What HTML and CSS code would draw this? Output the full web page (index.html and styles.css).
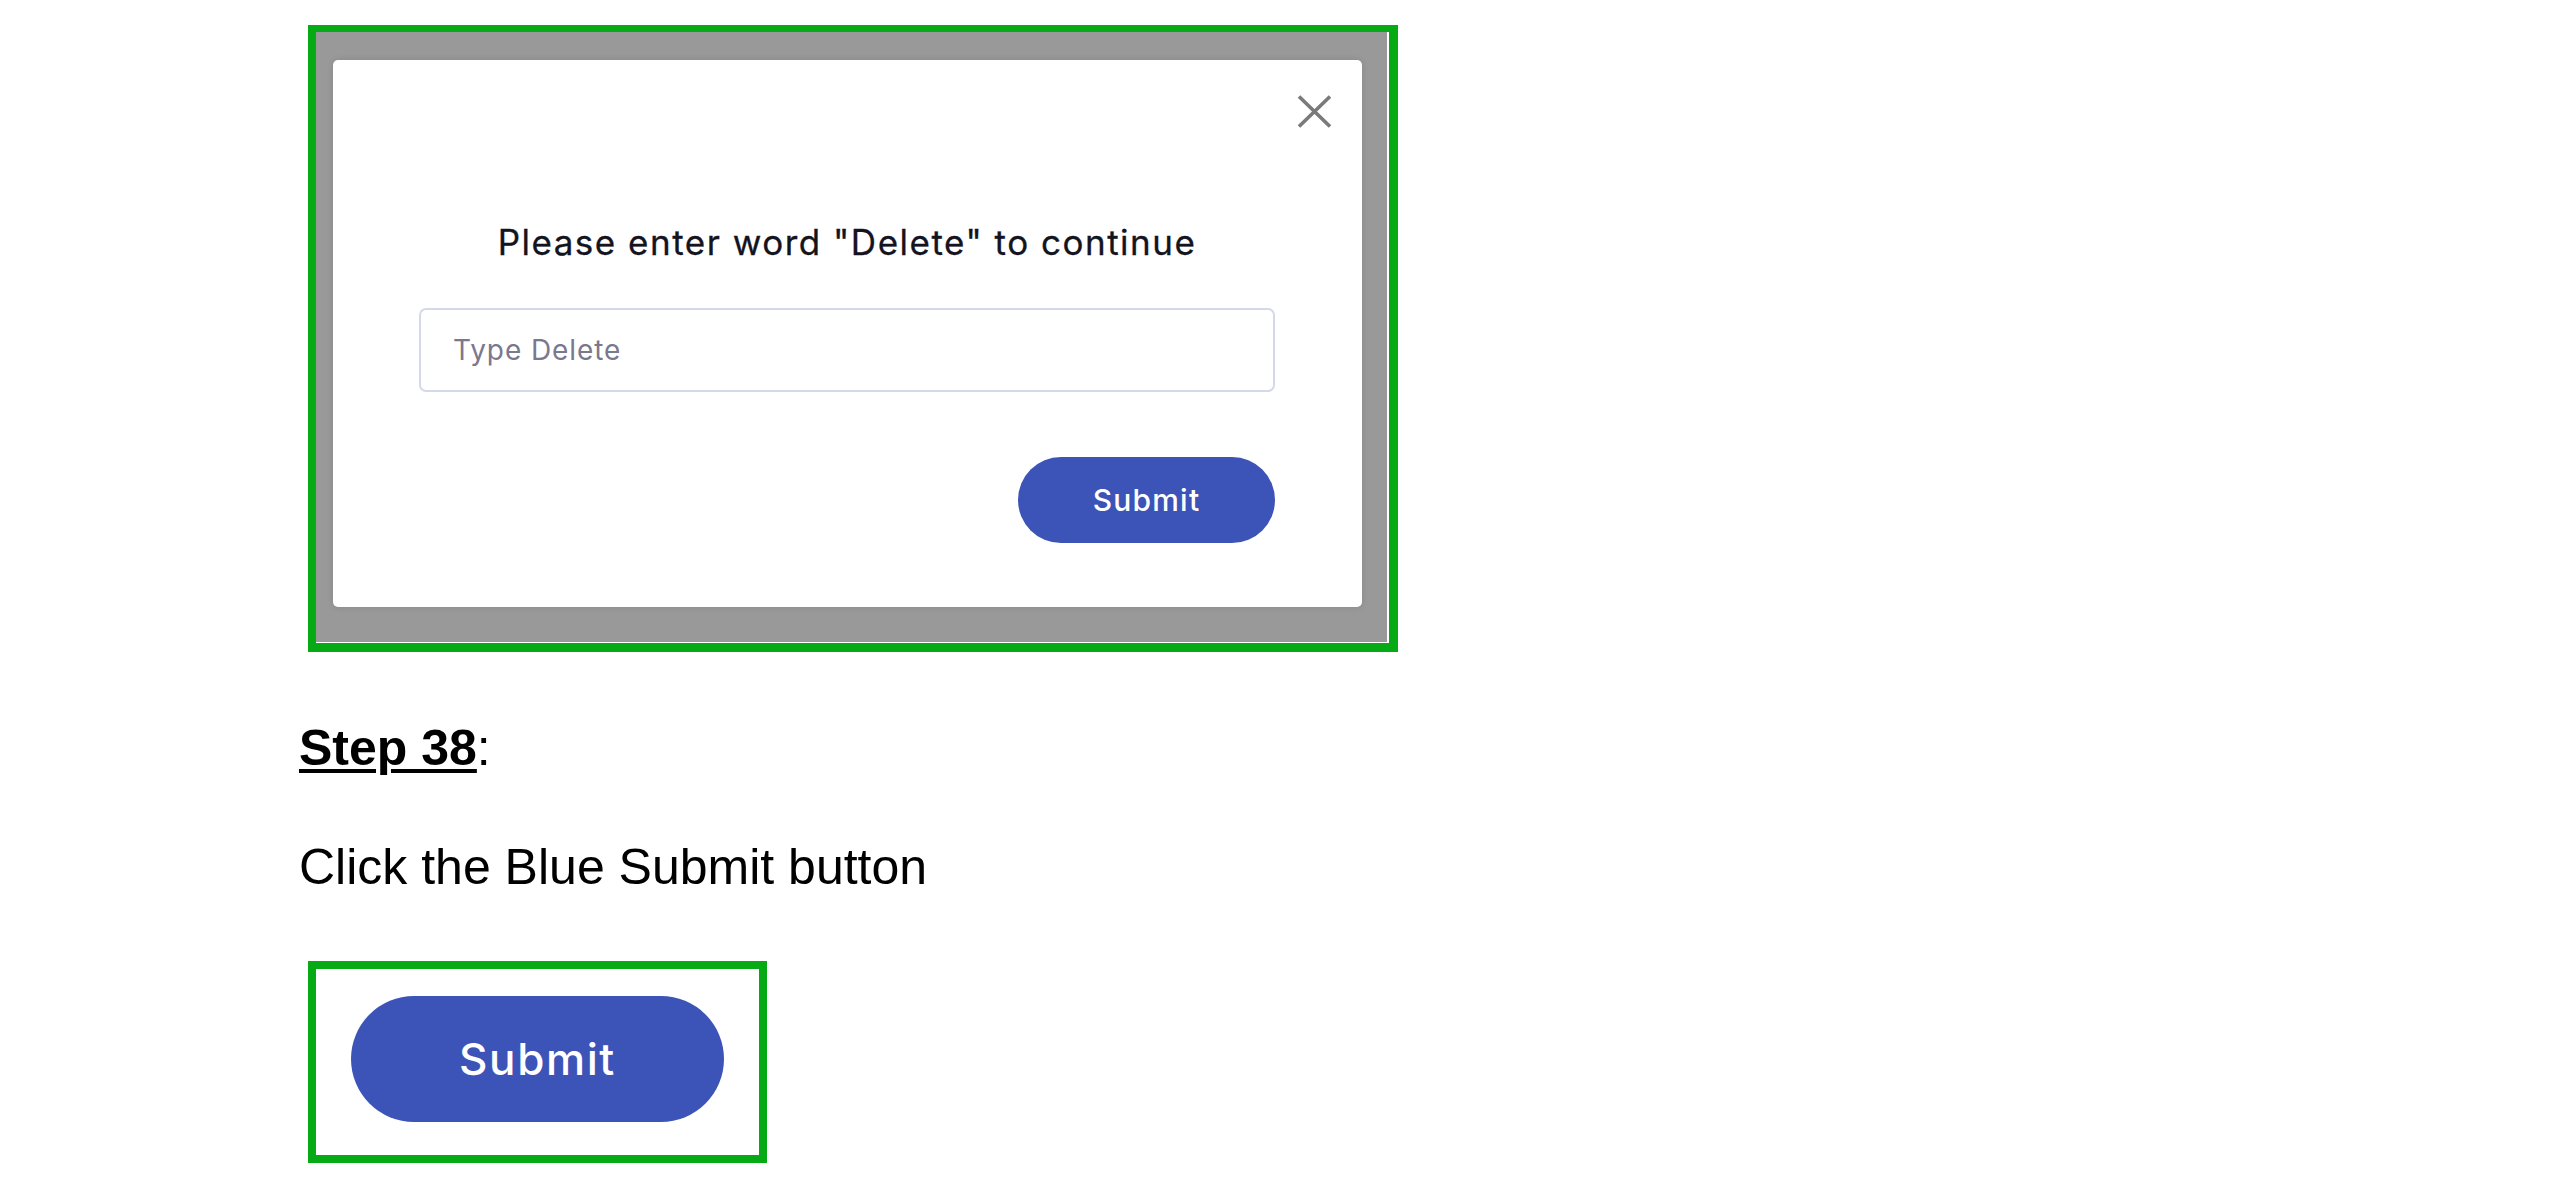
FILE: index.html
```html
<!DOCTYPE html>
<html lang="en">
<head>
<meta charset="utf-8">
<title>Step 38</title>
<link rel="stylesheet" href="styles.css">
</head>
<body>
<main class="doc">
  <figure class="shot shot-modal">
    <div class="overlay">
      <div class="modal">
        <div class="modal-head">
          <button class="close" aria-label="Close">
            <svg width="35" height="33" viewBox="0 0 35 33"><path d="M2 1.5 L33 31.5 M33 1.5 L2 31.5" stroke="#7a7a7a" stroke-width="3.6" fill="none"/></svg>
          </button>
        </div>
        <h2 class="modal-title">Please enter word "Delete" to continue</h2>
        <input class="field" type="text" placeholder="Type Delete">
        <div class="actions"><button class="submit">Submit</button></div>
      </div>
    </div>
  </figure>

  <p class="step"><u>Step 38</u>:</p>
  <p class="instr">Click the Blue Submit button</p>

  <figure class="shot shot-button">
    <button class="submit submit-big">Submit</button>
  </figure>
</main>
</body>
</html>
```

FILE: styles.css
```css
* { box-sizing: border-box; }
html, body { margin: 0; padding: 0; background: #ffffff; }
body { width: 2550px; height: 1200px; overflow: hidden; }

.doc {
  padding: 25px 0 0 299px;
  display: flex;
  flex-direction: column;
  align-items: flex-start;
}

figure { margin: 0; }

.shot-modal {
  margin-left: 9px;
  border-style: solid;
  border-color: #05aa15;
  border-width: 7px 9px 9px 8px;
  width: 1090px;
}

.overlay {
  background: #999999;
  border-right: 2px solid #ffffff;
  border-bottom: 1px solid #ffffff;
  padding: 28px 25px 35px 17px;
}

.modal {
  background: #ffffff;
  width: 1029px;
  border-radius: 5px;
  box-shadow: 0 0 6px rgba(0,0,0,0.12);
  padding: 35px 87px 64px 86px;
  display: flex;
  flex-direction: column;
  font-family: Inter, "Open Sans", sans-serif;
}

.modal-head {
  display: flex;
  justify-content: flex-end;
  margin-right: -57px;
  height: 33px;
}

.close {
  border: 0;
  background: none;
  padding: 0;
  width: 35px;
  height: 33px;
  display: block;
}
.close svg { display: block; }

.modal-title {
  margin: 94px 0 0 0;
  font-size: 35px;
  line-height: 40px;
  font-weight: 400;
  letter-spacing: 1.5px;
  color: #14141f;
  text-align: center;
  white-space: nowrap;
  -webkit-text-stroke: 0.3px #14141f;
}

.field {
  margin-top: 46px;
  width: 856px;
  height: 84px;
  border: 2px solid #d5d8ea;
  border-radius: 7px;
  padding: 0 0 0 32px;
  font-family: Inter, "Open Sans", sans-serif;
  font-size: 28px;
  letter-spacing: 0.9px;
  color: #333;
  outline: none;
}
.field::placeholder { color: #7a788f; }

.actions {
  margin-top: 65px;
  display: flex;
  justify-content: flex-end;
}

.submit {
  width: 257px;
  height: 86px;
  border: 0;
  border-radius: 43px;
  background: #3c53b8;
  color: #ffffff;
  font-family: Inter, "Open Sans", sans-serif;
  font-size: 30px;
  font-weight: 500;
  letter-spacing: 1.2px;
  padding: 0;
}

.step, .instr {
  margin: 0;
  font-family: "Liberation Sans", Arial, sans-serif;
  font-size: 50px;
  line-height: 50px;
  height: 50px;
  color: #000000;
  white-space: nowrap;
}
.step { margin-top: 71px; }
.step u { font-weight: 700; text-decoration-thickness: 4px; text-underline-offset: 4px; }
.instr { margin-top: 69px; }

.shot-button {
  margin-top: 69px;
  margin-left: 9px;
  width: 459px;
  height: 202px;
  border: 8px solid #05aa15;
  padding: 27px 35px 0 35px;
}

.submit-big {
  width: 373px;
  height: 126px;
  border-radius: 63px;
  font-size: 44px;
  letter-spacing: 1.6px;
}
```
